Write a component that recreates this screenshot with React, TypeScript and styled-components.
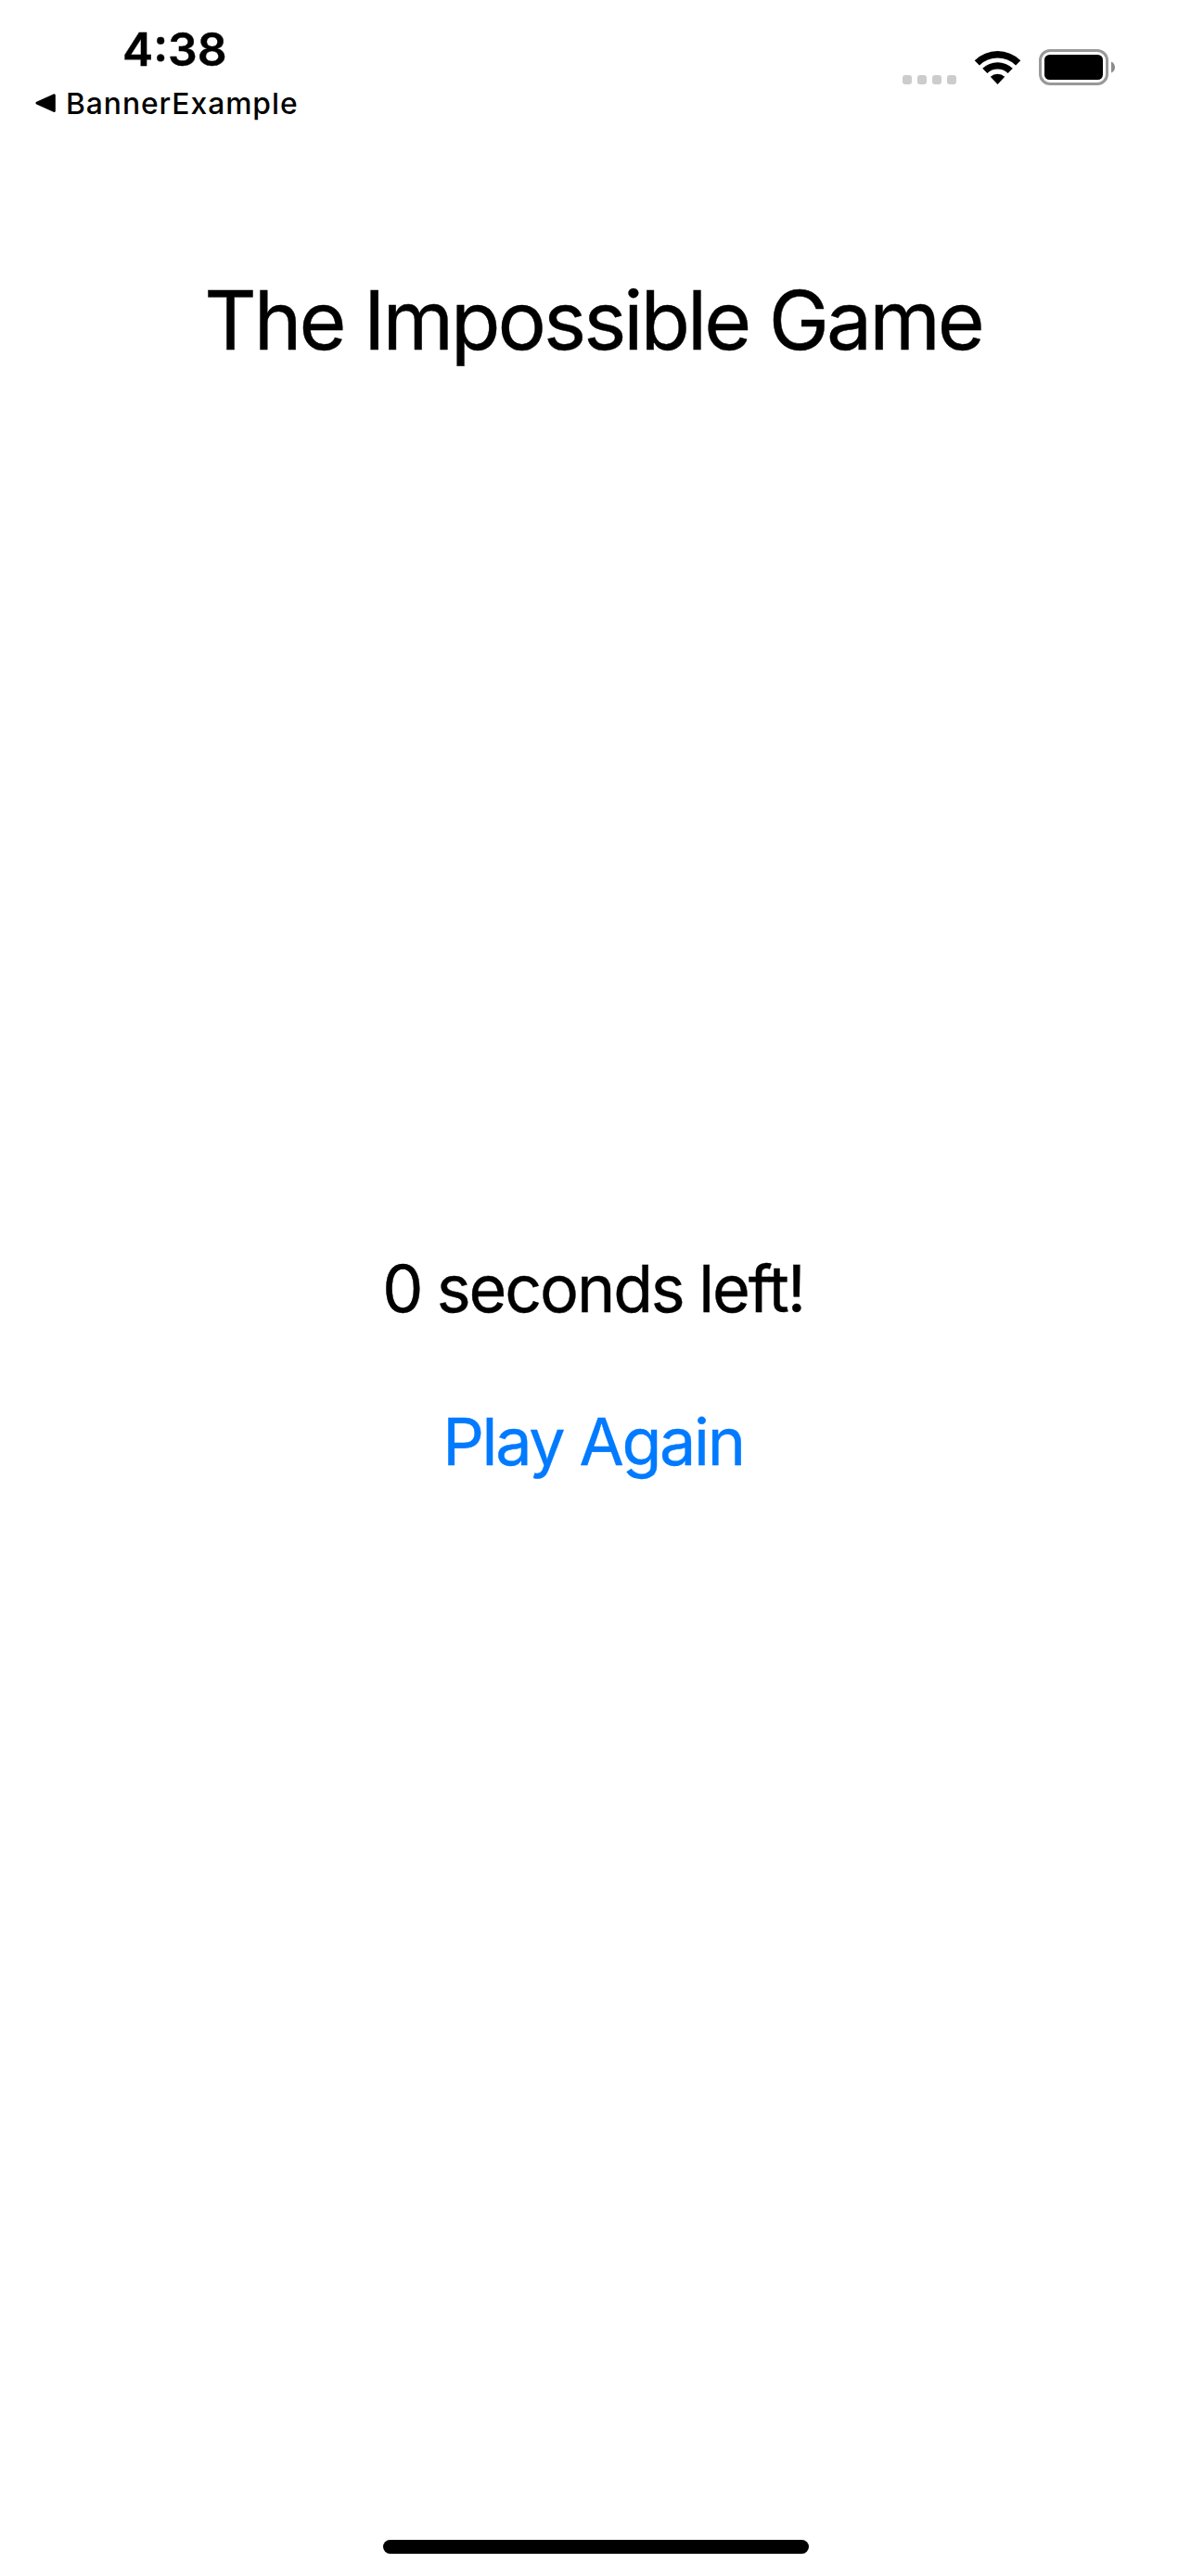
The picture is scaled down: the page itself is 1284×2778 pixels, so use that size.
import React from "react";
import styled, { createGlobalStyle } from "styled-components";

const GlobalStyle = createGlobalStyle`
  body { margin: 0; background: #fff; }
  * { box-sizing: border-box; }
`;

const Screen = styled.div`
  width: 1284px;
  height: 2778px;
  display: flex;
  flex-direction: column;
  background: #fff;
  color: #000;
  font-family: Inter, "Liberation Sans", sans-serif;
  font-weight: 400;
  -webkit-text-stroke: 0.4px currentColor;
  overflow: hidden;
`;

const StatusBar = styled.header`
  height: 141px;
  display: flex;
  justify-content: space-between;
  padding: 23px 82px 0 38px;
`;

const StatusLeft = styled.div`
  display: flex;
  flex-direction: column;
  gap: 11px;
`;

const Time = styled.div`
  padding-left: 94px;
  font-size: 49.8px;
  font-weight: 600;
  line-height: 60px;
  white-space: nowrap;
`;

const BackLink = styled.div`
  display: flex;
  align-items: center;
  gap: 11px;
  font-size: 31.8px;
  font-weight: 500;
  line-height: 36px;
  letter-spacing: 0.95px;
  white-space: nowrap;
  -webkit-text-stroke: 0;
`;

const StatusIcons = styled.div`
  height: 39px;
  margin-top: 30px;
  display: flex;
  align-items: flex-end;
`;

const Dots = styled.div`
  display: flex;
  gap: 6px;
  margin: 0 19px 1px 0;
`;

const Dot = styled.span`
  width: 10px;
  height: 10px;
  border-radius: 3px;
  background: #ccc;
`;

const Wifi = styled.svg`
  display: block;
  margin: 0 19px 1px 0;
`;

const Battery = styled.svg`
  display: block;
`;

const Content = styled.main`
  flex: 1;
  display: flex;
  flex-direction: column;
  align-items: center;
  padding: 150px 5px 0 0;
`;

const Title = styled.h1`
  margin: 0 0 948px;
  font-size: 87.5px;
  font-weight: 400;
  line-height: 108px;
  letter-spacing: -3.03px;
  white-space: nowrap;
`;

const Countdown = styled.p`
  margin: 0 0 79px;
  font-size: 70px;
  line-height: 86px;
  letter-spacing: -2.15px;
  word-spacing: -1px;
  white-space: nowrap;
`;

const PlayButton = styled.button`
  border: 0;
  padding: 0;
  background: none;
  color: #007aff;
  font-family: inherit;
  font-size: 70px;
  line-height: 86px;
  letter-spacing: -2.33px;
  white-space: nowrap;
`;

const HomeArea = styled.footer`
  display: flex;
  justify-content: center;
  padding: 0 0 24px 1px;
`;

const HomeIndicator = styled.div`
  width: 459px;
  height: 15px;
  border-radius: 8px;
  background: #000;
`;

export default function App() {
  return (
    <Screen>
      <GlobalStyle />
      <StatusBar>
        <StatusLeft>
          <Time>4:38</Time>
          <BackLink>
            <svg width="22" height="22" viewBox="0 0 22 22">
              <path d="M2 10.2 L20.3 1.9 V18.5 Z" fill="#000" stroke="#000" strokeWidth="3" strokeLinejoin="round" />
            </svg>
            <span>BannerExample</span>
          </BackLink>
        </StatusLeft>
        <StatusIcons>
          <Dots>
            <Dot />
            <Dot />
            <Dot />
            <Dot />
          </Dots>
          <Wifi width="51" height="37" viewBox="0 0 51 37">
            <path d="M.7 11.2 A35.5 35.5 0 0 1 50.3 11.2 L45.1 16.4 A28.2 28.2 0 0 0 5.9 16.4 Z" />
            <path d="M9.2 19.8 A23.5 23.5 0 0 1 41.8 19.8 L36.6 25 A16.2 16.2 0 0 0 14.4 25 Z" />
            <path d="M17.8 28.8 A11.5 11.5 0 0 1 33.2 28.8 L25.5 37 Z" />
          </Wifi>
          <Battery width="82" height="39" viewBox="0 0 82 39">
            <rect x="1.5" y="1.5" width="72" height="36" rx="10.5" fill="none" stroke="#999" strokeWidth="3" />
            <rect x="6" y="6" width="63" height="27" rx="5.5" />
            <path d="M78 13.4 C80.6 14.5 82 16.8 82 19.5 S80.6 24.5 78 25.6 Z" fill="#8c8c8c" />
          </Battery>
        </StatusIcons>
      </StatusBar>
      <Content>
        <Title>The Impossible Game</Title>
        <Countdown>0 seconds left!</Countdown>
        <PlayButton type="button">Play Again</PlayButton>
      </Content>
      <HomeArea>
        <HomeIndicator />
      </HomeArea>
    </Screen>
  );
}
